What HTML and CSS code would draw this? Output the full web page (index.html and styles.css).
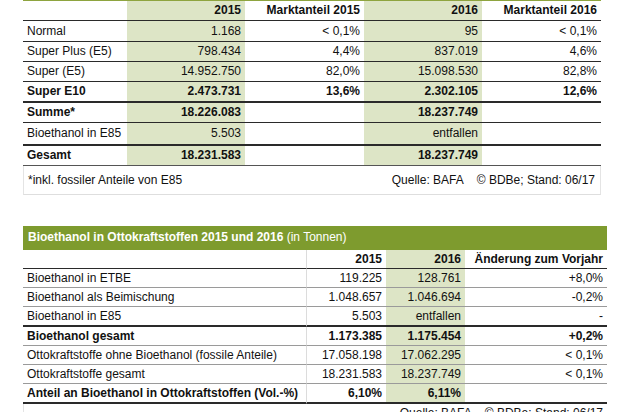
FILE: index.html
```html
<!DOCTYPE html>
<html lang="de">
<head>
<meta charset="utf-8">
<link rel="stylesheet" href="styles.css">
</head>
<body>
<div class="page">
  <table class="tbl tbl-top">
    <colgroup>
      <col class="c-label1"><col class="c-num1"><col class="c-share1"><col class="c-num1"><col class="c-share1">
    </colgroup>
    <tr class="head">
      <td></td><td class="g r b">2015</td><td class="r b">Marktanteil 2015</td><td class="g r b">2016</td><td class="r b">Marktanteil 2016</td>
    </tr>
    <tr class="h20">
      <td>Normal</td><td class="g r">1.168</td><td class="r">&lt; 0,1%</td><td class="g r">95</td><td class="r">&lt; 0,1%</td>
    </tr>
    <tr>
      <td>Super Plus (E5)</td><td class="g r">798.434</td><td class="r">4,4%</td><td class="g r">837.019</td><td class="r">4,6%</td>
    </tr>
    <tr>
      <td>Super (E5)</td><td class="g r">14.952.750</td><td class="r">82,0%</td><td class="g r">15.098.530</td><td class="r">82,8%</td>
    </tr>
    <tr class="bold thick">
      <td>Super E10</td><td class="g r">2.473.731</td><td class="r">13,6%</td><td class="g r">2.302.105</td><td class="r">12,6%</td>
    </tr>
    <tr class="bold">
      <td>Summe*</td><td class="g r">18.226.083</td><td></td><td class="g r">18.237.749</td><td></td>
    </tr>
    <tr class="thick h21">
      <td>Bioethanol in E85</td><td class="g r">5.503</td><td></td><td class="g r">entfallen</td><td></td>
    </tr>
    <tr class="bold">
      <td>Gesamt</td><td class="g r">18.231.583</td><td></td><td class="g r">18.237.749</td><td></td>
    </tr>
    <tr class="foot">
      <td colspan="5">
        <div class="foot-inner">
          <span>*inkl. fossiler Anteile von E85</span>
          <span class="src"><span>Quelle: BAFA</span><span>© BDBe; Stand: 06/17</span></span>
        </div>
      </td>
    </tr>
  </table>

  <div class="tbl2-wrap">
    <div class="bar"><b>Bioethanol in Ottokraftstoffen 2015 und 2016</b> (in Tonnen)</div>
    <table class="tbl tbl-bottom">
      <colgroup>
        <col class="c-label2"><col class="c-num2"><col class="c-num2b"><col class="c-chg">
      </colgroup>
      <tr class="head2">
        <td></td><td class="r b vl">2015</td><td class="g r b">2016</td><td class="r b">Änderung zum Vorjahr</td>
      </tr>
      <tr>
        <td>Bioethanol in ETBE</td><td class="r vl">119.225</td><td class="g r">128.761</td><td class="r">+8,0%</td>
      </tr>
      <tr>
        <td>Bioethanol als Beimischung</td><td class="r vl">1.048.657</td><td class="g r">1.046.694</td><td class="r">-0,2%</td>
      </tr>
      <tr class="thick">
        <td>Bioethanol in E85</td><td class="r vl">5.503</td><td class="g r">entfallen</td><td class="r">-</td>
      </tr>
      <tr class="bold">
        <td>Bioethanol gesamt</td><td class="r vl">1.173.385</td><td class="g r">1.175.454</td><td class="r">+0,2%</td>
      </tr>
      <tr>
        <td>Ottokraftstoffe ohne Bioethanol (fossile Anteile)</td><td class="r vl">17.058.198</td><td class="g r">17.062.295</td><td class="r">&lt; 0,1%</td>
      </tr>
      <tr>
        <td>Ottokraftstoffe gesamt</td><td class="r vl">18.231.583</td><td class="g r">18.237.749</td><td class="r">&lt; 0,1%</td>
      </tr>
      <tr class="bold thick">
        <td>Anteil an Bioethanol in Ottokraftstoffen (Vol.-%)</td><td class="r vl">6,10%</td><td class="g r">6,11%</td><td></td>
      </tr>
      <tr class="foot2">
        <td colspan="4"><div class="src src2"><span>Quelle: BAFA</span><span>© BDBe; Stand: 06/17</span></div></td>
      </tr>
    </table>
  </div>
</div>
</body>
</html>
```

FILE: styles.css
```css
* { box-sizing: border-box; }
html, body {
  margin: 0;
  padding: 0;
  background: #ffffff;
}
body {
  font-family: "Liberation Sans", Arial, sans-serif;
  font-size: 12px;
  color: #111;
  width: 630px;
  height: 412px;
  overflow: hidden;
}
.page {
  padding-left: 23px;
}
.tbl {
  border-collapse: separate;
  border-spacing: 0;
  table-layout: fixed;
}
.tbl td {
  padding: 0 4px;
  line-height: 19px;
  height: auto;
  border-bottom: 1px solid #2a2a2a;
  white-space: nowrap;
  overflow: hidden;
}
.tbl-top {
  width: 578px;
  border-top: 1px solid #8ea43f;
}
.c-label1 { width: 104px; }
.c-num1 { width: 118px; }
.c-share1 { width: 119px; }

.tbl-top .head td { line-height: 19px; }
.tbl-top .h20 td { line-height: 20px; }
.tbl-top .h21 td { line-height: 21px; }
.tbl .thick td { border-bottom-width: 2px; }

.g { background: #dde5c6; }
.r { text-align: right; }
.b, .bold td { font-weight: bold; }

.tbl .foot td {
  border-bottom: 1px solid #dedede;
  border-left: 1px solid #e4e4e4;
  border-right: 1px solid #e4e4e4;
  line-height: 28px;
  padding: 0 5px 0 4px;
}
.tbl-top tr:nth-last-child(2) td { border-bottom-color: #555; }

.foot-inner {
  display: flex;
  justify-content: space-between;
  align-items: center;
}
.src {
  display: flex;
  gap: 13px;
}

.tbl2-wrap {
  margin-top: 31px;
  width: 584px;
}
.bar {
  background: #7e9b2e;
  color: #ffffff;
  height: 24px;
  line-height: 22px;
  padding-left: 5px;
  font-size: 12px;
}
.tbl-bottom {
  width: 584px;
}
.c-label2 { width: 283px; }
.c-num2 { width: 80px; }
.c-num2b { width: 79px; }
.c-chg { width: 142px; }
.tbl-bottom td {
  line-height: 18px;
  border-bottom-color: #9a9a9a;
}
.tbl-bottom .head2 td { border-bottom-color: #2a2a2a; }
.tbl-bottom .thick td { border-bottom-color: #2a2a2a; }
.tbl-bottom .vl { border-left: 1px solid #dcdcdc; }
.tbl-bottom .foot2 td {
  border-bottom: none;
  border-left: 1px solid #e4e4e4;
  line-height: 16px;
  padding: 1px 4px 0 4px;
}
.src2 {
  justify-content: flex-end;
}
```
